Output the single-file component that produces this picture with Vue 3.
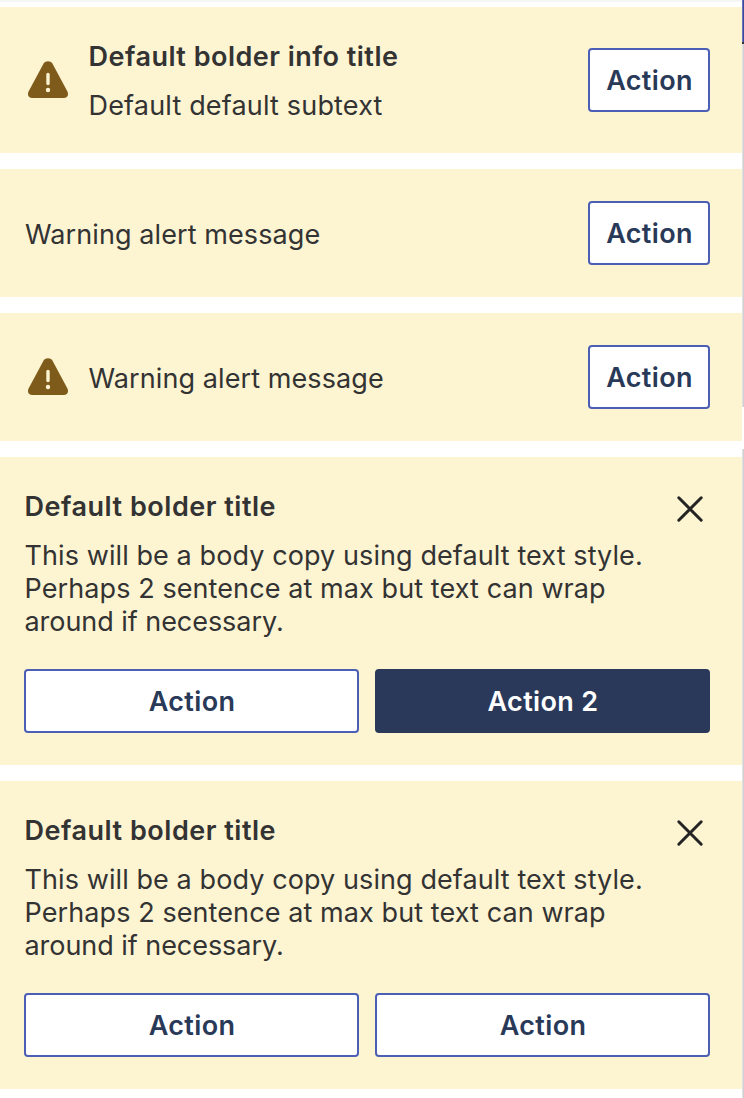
<script setup>
const inlineAlerts = [
  { icon: true, title: 'Default bolder info title', text: 'Default default subtext' },
  { icon: false, text: 'Warning alert message' },
  { icon: true, text: 'Warning alert message' },
]
const body = ['This will be a body copy using default text style.', 'Perhaps 2 sentence at max but text can wrap', 'around if necessary.']
const blockAlerts = [
  { title: 'Default bolder title', second: 'Action 2', primary: true },
  { title: 'Default bolder title', second: 'Action', primary: false },
]
</script>

<template>
  <main class="screen">
    <div class="stack">
      <section v-for="(a, i) in inlineAlerts" :key="'i' + i" class="alert row" :class="{ tall: a.title }">
        <svg v-if="a.icon" class="warn" viewBox="0 0 42 38" width="42" height="38">
          <path fill="#7f5b1b" d="M16.6 2.6C18.4-.6 23.6-.6 25.4 2.6L40.3 30.2C42.2 33.9 40.2 37 36.6 37H5.4C1.8 37-.2 33.9 1.7 30.2Z" />
          <path d="M21 13.4V22.6" stroke="#fdf4d2" stroke-width="3.4" stroke-linecap="round" />
          <circle cx="21" cy="29" r="2.2" fill="#fdf4d2" />
        </svg>
        <div class="copy">
          <h2 v-if="a.title" class="title">{{ a.title }}</h2>
          <p class="text">{{ a.text }}</p>
        </div>
        <button class="btn small">Action</button>
      </section>

      <section v-for="(a, i) in blockAlerts" :key="'b' + i" class="alert block">
        <div class="head">
          <h2 class="title">{{ a.title }}</h2>
          <svg class="close" viewBox="0 0 28 28" width="28" height="28">
            <path d="M2.8 2.8 25.2 25.2M25.2 2.8 2.8 25.2" fill="none" stroke="#242424" stroke-width="3" stroke-linecap="round" />
          </svg>
        </div>
        <p class="text body"><span v-for="line in body" :key="line" class="line">{{ line }}</span></p>
        <div class="actions">
          <button class="btn">Action</button>
          <button class="btn" :class="{ primary: a.primary }">{{ a.second }}</button>
        </div>
      </section>
    </div>
    <aside class="edge">
      <div class="edge-blue"></div>
      <div class="edge-gray"></div>
      <div class="edge-gap"></div>
      <div class="edge-gray rest"></div>
    </aside>
  </main>
</template>

<style>
body { background: #fff; }
</style>

<style scoped>
.screen {
  display: flex;
  width: 744px;
  height: 1098px;
  overflow: hidden;
  font-family: Inter, "Liberation Sans", sans-serif;
  color: #333;
}
.stack {
  box-sizing: border-box;
  width: 742px;
  border-top: 2px solid #f6f6f6;
  padding-top: 5px;
  display: flex;
  flex-direction: column;
  gap: 16px;
}
.alert { box-sizing: border-box; background: #fdf4d2; flex: none; }
.row { display: flex; align-items: center; height: 128px; padding: 0 32px 0 25px; }
.row.tall { height: 146px; }
.warn { margin: 0 19.5px 0 2px; flex: none; }
.copy { flex: 1; padding-top: 2px; }
.title, .text { margin: 0; font-size: 27px; line-height: 33px; white-space: nowrap; }
.title { font-weight: 600; letter-spacing: 0.48px; }
.block .title { letter-spacing: 0.52px; }
.text { font-weight: 400; letter-spacing: 0.09px; }
.tall .text { letter-spacing: 0.17px; }
.copy .title { margin-bottom: 16px; }
.btn {
  box-sizing: border-box;
  flex: 1;
  height: 64px;
  padding: 0 0 0 1px;
  border: 2px solid #4c5fb5;
  border-radius: 4px;
  background: #fff;
  color: #293958;
  font: 600 27px/33px Inter, "Liberation Sans", sans-serif;
  letter-spacing: 0.35px;
}
.btn.small { flex: none; width: 122px; }
.btn.primary { background: #2a3959; border-color: #2a3959; color: #fff; }
.block { height: 308px; padding: 33px 32px 0 24px; }
.head { display: flex; justify-content: space-between; height: 49px; padding: 0 6px 0 0.5px; }
.close { margin-top: 5px; }
.body { padding-left: 0.5px; }
.line { display: block; }
.line:last-child { letter-spacing: -0.05px; }
.actions { display: flex; gap: 16px; margin-top: 31px; }
.edge { width: 2px; display: flex; flex-direction: column; }
.edge-blue { height: 42px; background: linear-gradient(90deg, #6673b8 50%, #3a4a9c 50%); border-bottom: 2px solid #333; }
.edge-gray { height: 363px; background: linear-gradient(90deg, #e2e2e4 50%, #d0d0d2 50%); }
.edge-gap { height: 42px; }
.edge-gray.rest { flex: 1; }
</style>
